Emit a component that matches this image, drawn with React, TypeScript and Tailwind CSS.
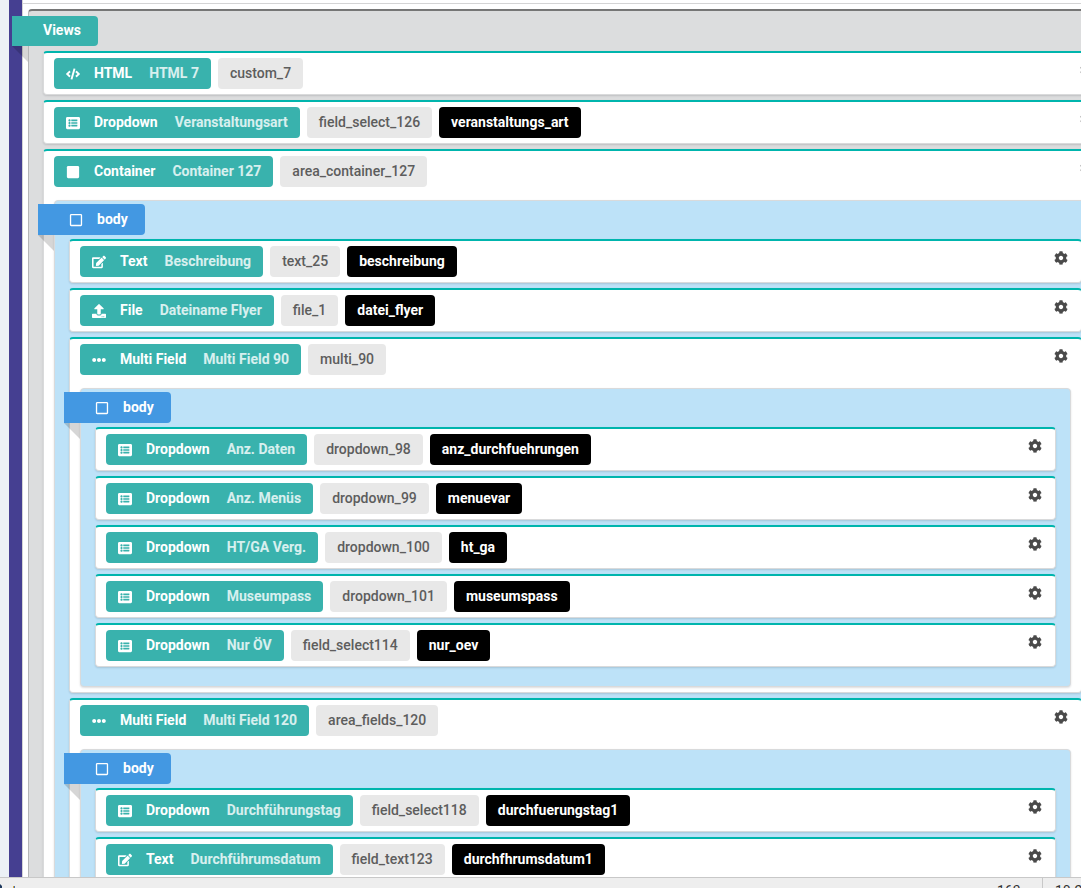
import React from 'react';
import {
  FaCode,
  FaCog,
  FaEdit,
  FaEllipsisH,
  FaListAlt,
  FaRegSquare,
  FaSquare,
  FaUpload,
} from 'react-icons/fa';

interface Field {
  type: 'HTML' | 'Dropdown' | 'Container' | 'Text' | 'File' | 'Multi Field';
  title: string;
  name: string;
  alias?: string;
  body?: Field[];
}

const icons = {
  HTML: FaCode,
  Dropdown: FaListAlt,
  Container: FaSquare,
  Text: FaEdit,
  File: FaUpload,
  'Multi Field': FaEllipsisH,
};

const views: Field[] = [
  { type: 'HTML', title: 'HTML 7', name: 'custom_7' },
  { type: 'Dropdown', title: 'Veranstaltungsart', name: 'field_select_126', alias: 'veranstaltungs_art' },
  {
    type: 'Container',
    title: 'Container 127',
    name: 'area_container_127',
    body: [
      { type: 'Text', title: 'Beschreibung', name: 'text_25', alias: 'beschreibung' },
      { type: 'File', title: 'Dateiname Flyer', name: 'file_1', alias: 'datei_flyer' },
      {
        type: 'Multi Field',
        title: 'Multi Field 90',
        name: 'multi_90',
        body: [
          { type: 'Dropdown', title: 'Anz. Daten', name: 'dropdown_98', alias: 'anz_durchfuehrungen' },
          { type: 'Dropdown', title: 'Anz. Menüs', name: 'dropdown_99', alias: 'menuevar' },
          { type: 'Dropdown', title: 'HT/GA Verg.', name: 'dropdown_100', alias: 'ht_ga' },
          { type: 'Dropdown', title: 'Museumpass', name: 'dropdown_101', alias: 'museumspass' },
          { type: 'Dropdown', title: 'Nur ÖV', name: 'field_select114', alias: 'nur_oev' },
        ],
      },
      {
        type: 'Multi Field',
        title: 'Multi Field 120',
        name: 'area_fields_120',
        body: [
          { type: 'Dropdown', title: 'Durchführungstag', name: 'field_select118', alias: 'durchfuerungstag1' },
          { type: 'Text', title: 'Durchführumsdatum', name: 'field_text123', alias: 'durchfhrumsdatum1' },
        ],
      },
    ],
  },
];

// Shaded corner that makes a label look folded round the segment's edge
const Fold: React.FC = () => (
  <svg className="absolute top-full left-0 w-4 h-4" viewBox="0 0 16 16" aria-hidden="true">
    <path d="M0 0H16V16Z" fill="#000" fillOpacity="0.16" />
  </svg>
);

const FieldCard: React.FC<{ field: Field }> = ({ field }) => {
  const Icon = icons[field.type];

  return (
    <li className="relative bg-white border border-[#d9dadb] border-t-2 border-t-[#00b5ad] rounded px-[10px] py-[5px] shadow-[0_1px_2px_rgba(34,36,38,0.15)]">
      <div className="flex items-center gap-[7px]">
        <button type="button" className="flex items-center h-[31px] px-3 rounded bg-[#39b2ad] text-white font-bold">
          <Icon className="w-[14px] h-[14px] mr-[14px]" />
          <span className="mr-[17px] pb-[2px]">{field.type}</span>
          <span className="pb-[2px] text-white/80">{field.title}</span>
        </button>
        <span className="h-[31px] px-3 rounded bg-[#e8e8e8] text-[#5d5d5d] font-medium leading-[31px]">{field.name}</span>
        {field.alias && (
          <span className="h-[31px] px-3 rounded bg-black text-white font-bold leading-[31px]">{field.alias}</span>
        )}
      </div>

      <button type="button" aria-label="Settings" className="absolute top-[10px] right-[13px] text-[#4a4a4a]">
        <FaCog className="w-[14px] h-[14px]" />
      </button>

      {field.body && (
        <div className="relative mt-[13px] bg-[#bde2f8] border border-[#d9dadb] rounded px-[14px] pb-[19px] shadow-[0_1px_2px_rgba(34,36,38,0.15)]">
          <div className="relative flex items-center w-[107px] h-[31px] mt-[3px] mb-1 -ml-[31px] pl-[31px] rounded-r bg-[#4398e2] text-white font-bold">
            <Fold />
            <FaRegSquare className="w-[14px] h-[14px] mr-[14px]" />
            <span className="pb-[2px]">body</span>
          </div>
          <FieldList fields={field.body} />
        </div>
      )}
    </li>
  );
};

const FieldList: React.FC<{ fields: Field[] }> = ({ fields }) => (
  <ul className="flex flex-col gap-[5px]">
    {fields.map((field) => (
      <FieldCard key={field.name} field={field} />
    ))}
  </ul>
);

const App: React.FC = () => {
  return (
    <div className="flex flex-col h-screen overflow-hidden bg-white font-['Roboto',sans-serif] text-sm whitespace-nowrap">
      <div className="flex flex-1 min-h-0">
        {/* Sidebar edge */}
        <div className="shrink-0 w-[9px] bg-[#ecf1f6]" />
        <div className="shrink-0 w-[13px] bg-[#453f91]" />

        <main className="flex-1 min-w-0 border-l border-[#d4d4d5]">
          <div className="h-1 border-b border-[#d4d4d5]" />
          {/* The builder is wider than the window and runs off to the right */}
          <section className="mt-[5px] ml-[5px] -mr-[42px] px-[14px] pb-4 bg-[#dcddde] border border-[#b5b6b7] border-t-2 border-t-[#767676] rounded">
            <div className="relative flex items-center w-[86px] h-[30px] mt-[5px] mb-[5px] -ml-[31px] pl-[31px] rounded-r bg-[#39b2ad] text-white font-bold">
              <Fold />
              <span className="pb-[2px]">Views</span>
            </div>
            <FieldList fields={views} />
          </section>
        </main>
      </div>

      {/* Status bar */}
      <footer className="relative z-10 flex shrink-0 h-[11px] overflow-hidden bg-[#eee] border-t border-[#c8c8c8] text-[#333]">
        <svg className="w-5 h-[10px] mr-auto" viewBox="0 0 20 10" aria-hidden="true">
          <path d="M0 6L2 8V10H0Z" fill="#1f3a5f" />
          <path d="M13 8H14V10H13Z" fill="#d9a53a" />
          <path d="M14 8H15V10H14Z" fill="#3f6fb5" />
        </svg>
        <span className="w-[61px] pl-4 pt-[3px]">163</span>
        <span className="w-[39px] pl-3 pt-[3px] border-l border-[#c8c8c8]">10.20</span>
      </footer>
    </div>
  );
};

export default App;
